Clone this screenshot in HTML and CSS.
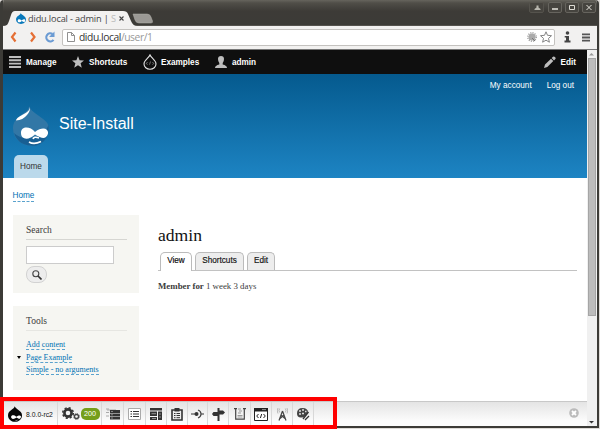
FILE: index.html
```html
<!DOCTYPE html>
<html lang="en">
<head>
<meta charset="utf-8">
<title>admin | Site-Install</title>
<link rel="stylesheet" href="styles.css">
</head>
<body>
<div class="desktop">
<div class="window">
  <header class="titlebar">
    <svg class="tab-shape" width="155" height="15" viewBox="0 0 155 15"><path d="M0 15C4 15 5 13 6 10L8 4Q9 0 12 0H120Q124 0 125 3L128 10Q130 15 134 15Z" fill="#f2f1f0"/><path d="M130 3H144Q147 3 148 6L149.500 10Q150 12 148 12H136Q133 12 132 9Z" fill="#9b9995" stroke="#b3b0aa" stroke-width=".5"/></svg>
    <div class="tab">
      <svg width="10" height="11" viewBox="0 0 36 40"><use href="#drop-blue"/></svg>
      <span class="tab-title">didu.local - admin | <i>S</i></span>
      <svg class="tab-close" width="5" height="5" viewBox="0 0 5 5"><path d="M.5.5l4 4m0-4l-4 4" stroke="#444" stroke-width="1.100"/></svg>
    </div>
    <div class="controls">
      <span class="ctl wide"><svg width="15" height="10"><path d="M6.500 2.500h2v2l2 1.500v1h-6V6l2-1.500z" fill="#b8b6ae"/></svg></span>
      <span class="ctl"><svg width="13" height="10"><path d="M3 6h6" stroke="#e8e6df" stroke-width="1.300"/></svg></span>
      <span class="ctl"><svg width="13" height="10"><path d="M3.500 2.500h5v4h-5z" fill="none" stroke="#dddbd4"/></svg></span>
      <span class="ctl"><svg width="13" height="10"><path d="M3.500 2l5 5m0-5l-5 5" stroke="#e8e6df"/></svg></span>
    </div>
  </header>

  <div class="toolbar">
    <svg width="47" height="12" viewBox="0 0 47 12"><path d="M6.500 1.500L3 6L6.500 10.500M22 1.500L25.500 6L22 10.500" fill="none" stroke="#e56f35" stroke-width="2.200"/><path d="M44.500 8.800A4 4 0 1 1 43.500 3" fill="none" stroke="#6b9bd3" stroke-width="2.200"/><path d="M45.500 .5V6H40Z" fill="#6b9bd3"/></svg>
    <div class="address">
      <svg width="8" height="10" viewBox="0 0 8 10"><path d="M.5.5h4l3 3v6h-7zM4.500.5v3h3" fill="#fff" stroke="#858585" stroke-width=".9"/></svg>
      <span class="url">didu.local<i>/user/1</i></span>
      <svg class="addr-icons" width="26" height="12" viewBox="0 0 26 12"><circle cx="6" cy="6" r="3.500" fill="#aaa"/><circle cx="6" cy="6" r="4.200" fill="none" stroke="#999" stroke-width="1.500" stroke-dasharray="1 1.200"/><path d="M6 7l3 3" stroke="#777"/><path d="M20 .8l1.500 3.500 4 .4-3 2.700.9 3.800L20 9.200l-3.400 2 .9-3.800-3-2.700 4-.4z" fill="#fff" stroke="#777" stroke-width=".9"/></svg>
    </div>
    <svg width="7" height="12" viewBox="0 0 7 12"><circle cx="3.500" cy="2" r="1.800" fill="#444"/><path d="M.7 5h4.300v4.500h1.500v2h-6v-2H2V6.500H.7z" fill="#444"/></svg>
    <svg class="menu-icon" width="8" height="9"><path d="M0 1.300h8M0 4.500h8M0 7.700h8" stroke="#555" stroke-width="1.800"/></svg>
  </div>

  <div class="viewport">
    <div class="page">
      <nav class="adminbar">
        <a class="n1"><svg width="12" height="12"><path d="M0 1h12M0 4.300h12M0 7.600h12M0 11h12" stroke="#bebebe" stroke-width="1.900"/></svg>Manage</a>
        <a class="n2"><svg width="12" height="12" viewBox="0 0 12 12"><path d="M6 0l1.600 4.200 4.400.2-3.400 2.800 1.200 4.500L6 9.200l-3.800 2.500 1.200-4.500L0 4.400l4.400-.2z" fill="#bebebe"/></svg>Shortcuts</a>
        <a class="n3"><svg width="14" height="16" viewBox="0 0 14 16"><path d="M7 1C6 4 1 6 1 10a6 5.300 0 0 0 12 0C13 6 8 4 7 1z" fill="none" stroke="#e5e5e5" stroke-width="1.100"/><path d="M4.600 8L3.200 9.500l1.400 1M9.400 8l1.400 1.500-1.400 1M7.500 7.500l-1 3.200" fill="none" stroke="#999" stroke-width=".7"/></svg>Examples</a>
        <a class="n4"><svg width="12" height="12" viewBox="0 0 12 12"><path d="M3 3Q3 0 6 0T9 3Q9 5.500 7.700 7V8.500Q12 9.500 12 12H0Q0 9.500 4.300 8.500V7Q3 5.500 3 3" fill="#bebebe"/></svg>admin</a>
        <a class="edit"><svg width="12" height="12" viewBox="0 0 12 12"><path d="M0 12l1-3.400L7 2.700l2.300 2.300-6 5.900zM7.700 2L9 .7q.8-.6 1.500 0l.9.900q.6.700 0 1.400L10 4.400z" fill="#bebebe"/></svg>Edit</a>
      </nav>
      <header class="site">
        <div class="account"><a>My account</a><a>Log out</a></div>
        <div class="brand">
          <svg width="36" height="40" viewBox="0 0 36 40"><path d="M16 0C16 8 0 9 0 22.500C0 32 8 39.500 18 39.500S36 32 36 22.500C36 12 19 9 16 0" fill="#3277a6"/><path d="M1 27Q8 34 20 32T35.500 19Q37 29 31 35T18 39.500Q5 39 1 27" fill="#185f93"/><path d="M17 1Q17 5 10 8.500T3 14.500Q10 14 14 9Q17.500 5 17 1" fill="#fff"/><path d="M22 26C17 20 8 20 8 27S16 34.500 22 28.500C28 32 32 34 34.500 29S31 19 22 26" fill="#fff"/><path d="M20 33q1-3 6-1M16 36q5 3 12-.5" fill="none" stroke="#fff" stroke-width="1.600"/></svg>
          <h1>Site-Install</h1>
        </div>
        <a class="home-tab">Home</a>
      </header>
      <div class="crumb"><a>Home</a></div>
      <div class="columns">
        <aside>
          <section class="block search"><h2>Search</h2><div class="field"></div><div class="search-btn"><svg width="10" height="10" viewBox="0 0 10 10"><circle cx="3.800" cy="3.800" r="3" fill="none" stroke="#444" stroke-width="1.100"/><path d="M6 6l3.500 3.500" stroke="#333" stroke-width="1.700"/></svg></div></section>
          <section class="block tools"><h2>Tools</h2><a>Add content</a><a class="parent">Page Example</a><a>Simple - no arguments</a></section>
        </aside>
        <main>
          <h2>admin</h2>
          <div class="tabs"><a class="active">View</a><a class="short">Shortcuts</a><a>Edit</a></div>
          <p><b>Member for</b> 1 week 3 days</p>
        </main>
      </div>
      <footer class="profiler">
        <div class="c-logo"><svg width="14" height="16" viewBox="0 0 36 40"><path d="M17 0C17 8 0 10 0 23C0 33 8 40 18 40S36 33 36 23C36 11 20 8 17 0" fill="#050505"/><path d="M21 27C16 22 8 22 8 28S16 34 22 29C28 33 31 34 33 29S30 21 21 27M18 36q4 2 9-1" fill="#fff"/></svg><span>8.0.0-rc2</span></div>
        <div class="c-status"><svg width="18" height="14" viewBox="0 0 18 14"><circle cx="6" cy="6" r="3.600" fill="none" stroke="#333" stroke-width="2.600"/><circle cx="6" cy="6" r="5.300" fill="none" stroke="#333" stroke-width="1.500" stroke-dasharray="2.160 2"/><circle cx="14.500" cy="9.500" r="2" fill="none" stroke="#444" stroke-width="1.300"/><circle cx="14.500" cy="9.500" r="3" fill="none" stroke="#444" stroke-width=".8" stroke-dasharray="1.200 1.150"/></svg><span class="badge">200</span></div>
        <div class="w22"><svg width="14" height="12" viewBox="0 0 14 12"><path d="M0 1h3M0 4.500h3M0 8h3M1 2h9" stroke="#aaa"/><path d="M4 2h10v3H4zM4 5.500h10v2.500H4zM4 8.500h10v3H4z" fill="#333"/><path d="M5 3.500h2M5 6.800h2M5 10h2" stroke="#aaa" stroke-width=".7"/></svg></div>
        <div class="w22"><svg width="13" height="12" viewBox="0 0 13 12"><path d="M.5.5h12v11H.5z" fill="#fff" stroke="#aaa"/><path d="M2.500 3.500h1.500M2.500 6h1.500M2.500 8.500h1.500M5 3.500h6M5 6h6M5 8.500h6" stroke="#333"/></svg></div>
        <div class="w21"><svg width="12" height="12" viewBox="0 0 12 12"><path d="M0 0h12v2.500H0zM0 3.500h7V8H0zM8 3.500h4V12H8zM0 9h7v3H0z" fill="#333"/><path d="M1.500 5.700H6M9 6h2M9 9h2M2 10.500h4" stroke="#aaa" stroke-width=".8"/></svg></div>
        <div class="w21"><svg width="12" height="13" viewBox="0 0 12 13"><path d="M1 2h10v10H1z" fill="#eee" stroke="#333" stroke-width="1.600"/><path d="M3.500 0h5v3.500h-5z" fill="#333"/><path d="M3 5.500h1.500M3 7.500h1.500M3 9.700h1.500M5.500 5.500H9M5.500 7.500H9M5.500 9.700H9" stroke="#333"/></svg></div>
        <div class="w20"><svg width="13" height="10" viewBox="0 0 13 10"><path d="M0 5h4M10 5h3" stroke="#333"/><circle cx="5.500" cy="5" r="2" fill="#333"/><path d="M7 1q3 1 3 4t-3 4" fill="none" stroke="#444" stroke-width="1.200"/></svg></div>
        <div class="w21"><svg width="13" height="13" viewBox="0 0 13 13"><path d="M5.500 0h2v13h-2zM6 4v4H1.500L0 6 1.500 4zM6 2.500h5l2 2L11 6.500H6z" fill="#333"/></svg></div>
        <div class="w22"><svg width="12" height="12" viewBox="0 0 12 12"><path d="M0 .7h3M9 .7h3M1.700 1v10.200h8.600V1" fill="none" stroke="#444" stroke-width="1.200"/><path d="M4 1h3M5 3h3M4 5h3M3.500 7.500h5M3.500 9h5" stroke="#999"/></svg></div>
        <div class="w21"><svg width="14" height="13" viewBox="0 0 14 13"><path d="M.5.5h13v12H.5z" fill="#fff" stroke="#222"/><path d="M0 0h14v3.500H0z" fill="#222"/><path d="M8.500 1.600h1M10.500 1.600h1" stroke="#fff"/><path d="M4.500 6L2.700 8l1.800 2M9.500 6l1.800 2-1.800 2M7.700 6l-1.300 4" fill="none" stroke="#222"/></svg></div>
        <div class="w21"><svg width="11" height="13" viewBox="0 0 11 13"><path d="M5.500 3L2 12.500M5.500 3L9 12.500M4 7l4 3.500M7 7l-4 3.500" fill="none" stroke="#444" stroke-width="1.200"/><path d="M2.700.5q-1.500 2 0 4M8.300.5q1.500 2 0 4M1 0q-1.500 3 0 5.500M10 0q1.500 3 0 5.500" fill="none" stroke="#aaa" stroke-width=".8"/></svg></div>
        <div class="w21"><svg width="13" height="13" viewBox="0 0 13 13"><path d="M5.500 0Q11 0 11 4.500L7 9Q0 11 0 5.500Q0 0 5.500 0" fill="#444"/><path d="M2 3h2M5 2h2M8 3.500h1.500M2 6h2M5 5.500h2" stroke="#ddd" stroke-width="1.300"/><path d="M11.500 4L6 11M12 8l-4 4" stroke="#333" stroke-width="1.300"/></svg></div>
        <svg class="hide" width="10" height="10" viewBox="0 0 10 10"><circle cx="5" cy="5" r="4.800" fill="#bbb"/><path d="M3 3l4 4m0-4L3 7" stroke="#fff" stroke-width="1.800"/></svg>
      </footer>
    </div>
    <div class="scroll"><svg width="9" height="8"><path d="M2 5.500h5L4.500 3z" fill="#999"/></svg><div class="thumb"></div><svg class="down" width="9" height="8"><path d="M2 3h5L4.500 5.500z" fill="#333"/></svg></div>
  </div>
</div>
<div class="highlight"></div>
</div>
<svg class="defs"><defs><g id="drop-blue"><path d="M17 0C17 8 0 10 0 23C0 33 8 40 18 40S36 33 36 23C36 11 20 8 17 0" fill="#0878ba"/><path d="M20 27C14 21 5 22 6 29S16 34 21 29C28 35 32 34 33 28S28 21 20 27" fill="#fff"/></g></defs></svg>
</body>
</html>
```
FILE: styles.css
```css
* { box-sizing: border-box; }
body { margin: 0; font-family: "Liberation Sans", Arial, sans-serif; font-size: 8px; overflow: hidden; }
svg { display: block; flex: none; }
h1, h2, p { margin: 0; font-weight: normal; }
i { font-style: normal; }
.defs { position: absolute; width: 0; height: 0; }
.desktop { position: relative; width: 600px; height: 429px; background: #dedbd7; overflow: hidden; }
.window { width: 599px; height: 428px; display: flex; flex-direction: column; background: #f2f1f0; border: solid #3c3b37; border-width: 0 2px 2px 3px; border-radius: 4px 4px 0 0; overflow: hidden; }
.titlebar { position: relative; height: 26px; flex: none; display: flex; justify-content: space-between; background: linear-gradient(#66645d 0, #504e48 3px, #3d3b37 11px, #3c3b37 25px); border-bottom: 1px solid #55534e; }
.tab-shape { position: absolute; left: 0; top: 11px; }
.tab { position: relative; display: flex; align-items: center; height: 14px; margin: 11px 0 0 12.500px; font: 9.200px "Open Sans", sans-serif; color: #444; }
.tab-title { width: 89px; margin-left: 2.500px; white-space: nowrap; letter-spacing: -.15px; }
.tab-title i { color: #bbb; }
.tab-close { margin-left: 2px; }
.controls { display: flex; gap: 3px; padding: 2px 1px 0 0; }
.ctl { height: 11px; border: 1px solid #66645e; border-radius: 2px; background: #46443f; }
.ctl svg { height: 9px; width: 12px; }
.ctl.wide { margin-right: 1px; border-color: #55534d; }
.ctl.wide svg { width: 13px; }
.toolbar { height: 24px; flex: none; display: flex; align-items: center; padding: 0 7px 1px 6px; border-bottom: 1px solid #777; background: #f2f1f0; }
.address { width: 493px; height: 17px; margin: 0 9px 0 6px; padding: 0 2px 0 4px; border: 1px solid #c4c2bf; border-radius: 2px; background: #fff; display: flex; align-items: center; }
.url { margin-left: 4px; font: 10.300px "Open Sans", sans-serif; color: #333; letter-spacing: -.44px; }
.url i { color: #999; }
.addr-icons { margin-left: auto; }
.menu-icon { margin-left: auto; }
.viewport { flex: 1; min-height: 0; display: flex; }
.page { width: 584px; display: flex; flex-direction: column; background: #fff; }
.adminbar { height: 24px; flex: none; display: flex; align-items: center; padding: 0 11px 0 6px; background: #0f0f0f; color: #fff; font-weight: bold; font-size: 8.200px; }
.adminbar a { display: flex; align-items: center; gap: 5px; white-space: nowrap; }
.adminbar .n1 { width: 63px; }
.adminbar .n2 { width: 71px; }
.adminbar .n3 { width: 72px; gap: 4px; }
.adminbar .edit { margin-left: auto; }
.site { height: 104px; flex: none; display: flex; flex-direction: column; background: linear-gradient(#055a8e, #1d84c3); color: #fff; }
.account { display: flex; justify-content: flex-end; gap: 15px; height: 24px; padding-right: 13px; line-height: 24px; font-size: 8.200px; }
.brand { display: flex; height: 57px; padding: 8px 0 0 10px; gap: 10px; }
.brand h1 { font-size: 16px; line-height: 35px; }
.home-tab { width: 34px; height: 23px; margin-left: 11px; border-radius: 5px 5px 0 0; background: #bbd9eb; color: #333; line-height: 24px; text-align: center; font-size: 8.200px; }
.crumb { height: 37px; flex: none; padding: 13px 0 0 9.500px; font-size: 8.200px; }
.crumb a, .tools a { color: #0071b3; border-bottom: 1px dashed #5aa2cd; }
.crumb a { line-height: 10px; display: inline-block; }
.columns { display: flex; height: 186px; flex: none; gap: 19px; padding: 0 10px; font-family: "Liberation Serif", serif; }
aside { width: 126px; display: flex; flex-direction: column; gap: 13px; }
.block { padding: 9px 13px; background: #f6f6f2; color: #3b3b3b; display: flex; flex-direction: column; align-items: flex-start; }
.block h2 { width: 101px; height: 16px; line-height: 13px; font-size: 9.500px; border-bottom: 1px solid #d6d6d2; }
.search { height: 78px; }
.field { width: 88px; height: 18px; margin-top: 6px; border: 1px solid #ccc; background: #fff; }
.search-btn { width: 21px; height: 17px; margin-top: 2px; padding: 3px 0 0 5px; border: 1px solid #d2d2d2; border-radius: 8px; background: #ededed; }
.tools { height: 84px; }
.tools h2 { margin-bottom: 9px; border-color: #e6e6e2; }
.tools a { position: relative; height: 10px; line-height: 9px; margin-bottom: 2.700px; font-size: 8px; }
.parent::before { content: ""; position: absolute; left: -9px; top: 3px; border: 2.500px solid transparent; border-top: 3px solid #000; border-bottom: 0; }
main { flex: 1; padding-top: 8px; }
main h2 { height: 29px; line-height: 25px; font-size: 17.600px; color: #111; }
.tabs { display: flex; height: 19px; gap: 3px; padding-left: 2px; border-bottom: 1px solid #c2c2c2; font: 8.200px "Liberation Sans", sans-serif; }
.tabs a { height: 18px; width: 28px; line-height: 16px; text-align: center; border: 1px solid #bbb; border-bottom: 0; border-radius: 5px 5px 0 0; background: #ededed; color: #111; -webkit-text-stroke: .15px #111; }
.tabs .active { width: 32px; height: 19px; background: #fff; color: #000; }
.tabs .short { width: 49px; }
main p { margin-top: 10px; font-size: 8.850px; line-height: 11px; color: #3b3b3b; }
.profiler { flex: 1; display: flex; border-top: 1px solid #c8c8c8; background: linear-gradient(#e4e4e4, #fcfcfc 80%); }
.profiler > div { height: 24px; display: flex; align-items: center; justify-content: center; border-right: 1px solid #d8d8d8; }
.profiler .c-logo { width: 55px; gap: 4px; padding-left: 1px; font: 6.800px "Liberation Sans", sans-serif; color: #111; }
.profiler .c-status { width: 44px; gap: 1px; padding-left: 2px; }
.badge { width: 19px; height: 12px; border-radius: 5px; background: #759e1a; color: #fff; font-size: 7.200px; line-height: 12px; text-align: center; }
.w20 { width: 20px; }
.w21 { width: 21px; }
.w22 { width: 22px; }
.hide { margin: 6px 8px 0 auto; }
.scroll { flex: 1; display: flex; flex-direction: column; background: #f0f0f0; }
.thumb { width: 8px; height: 258px; margin-left: 1px; background: #bcbcbc; border: 1px solid #a5a5a5; }
.down { margin-top: auto; }
.highlight { position: absolute; left: 0; top: 397px; width: 337px; height: 32px; border: 4px solid #f00; }
```
